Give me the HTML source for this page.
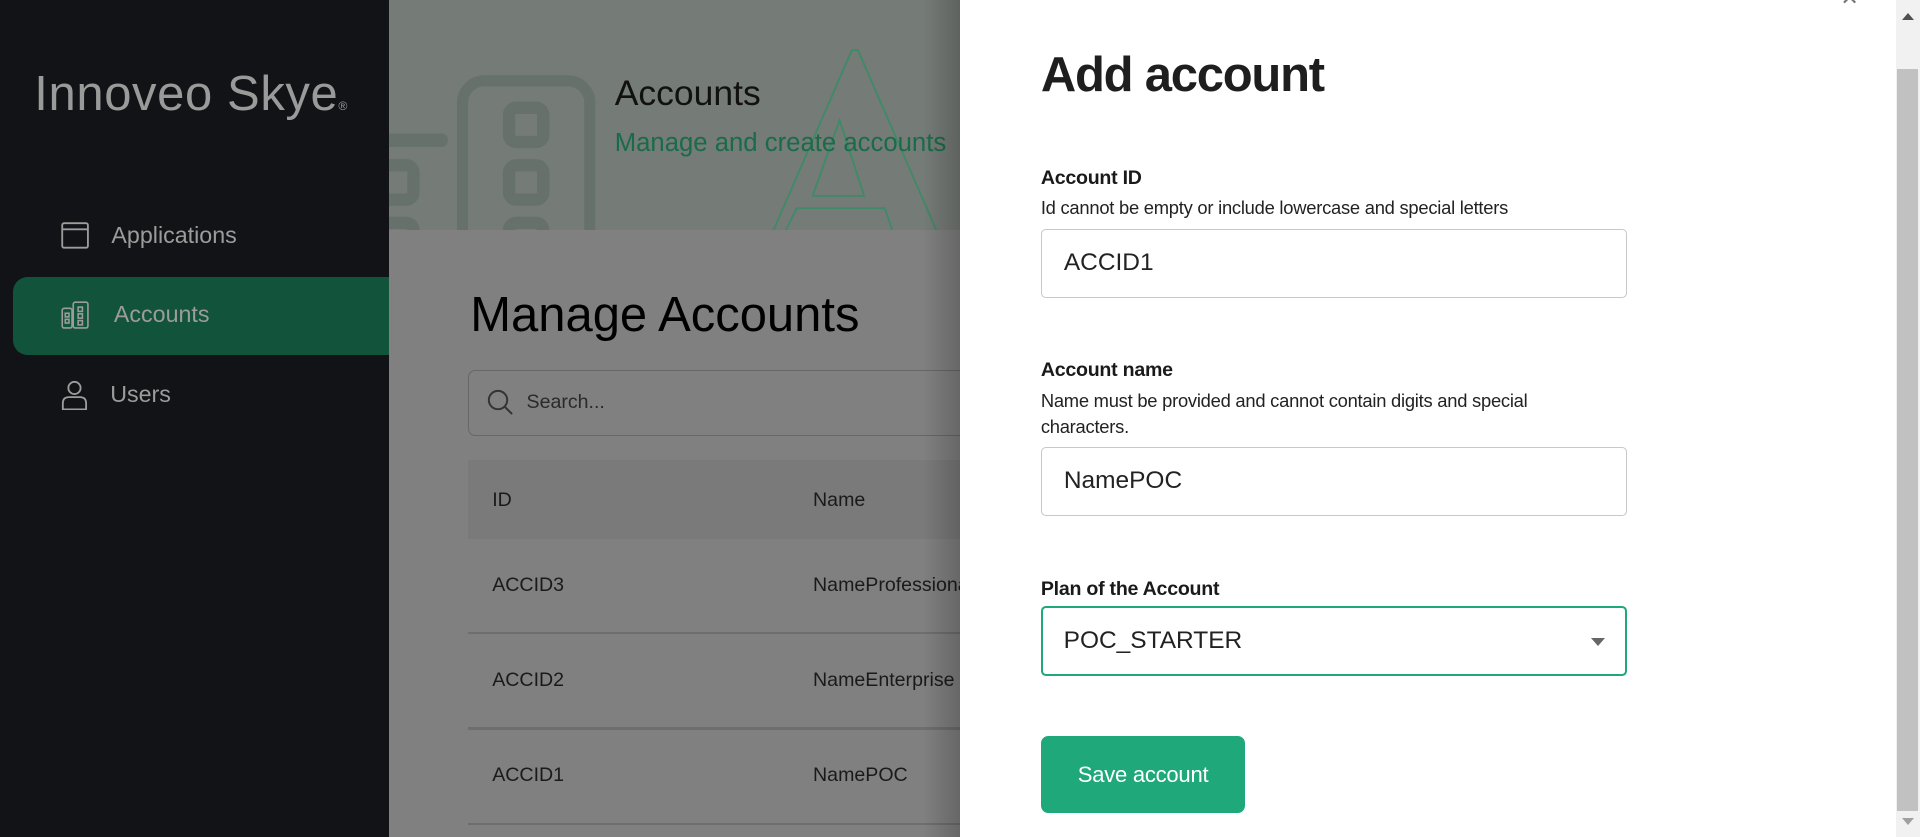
<!DOCTYPE html>
<html><head><meta charset="utf-8"><style>
html,body{margin:0;padding:0;width:1920px;height:837px;overflow:hidden;background:#fff}
#w{zoom:1.22449;width:1568px;height:684px;position:relative;font-family:"Liberation Sans",sans-serif;overflow:hidden}
.a{position:absolute}
#side{left:0;top:0;width:318px;height:684px;background:#121316}
.nav{color:#9c9c9c;font-size:19px}
#main{left:318px;top:0;width:466px;height:684px;background:#808080}
#hdr{left:318px;top:0;width:466px;height:188px;background:#757b77;overflow:hidden}
.row{left:382px;width:402px;border-bottom:2px solid #6e6e6e;height:0}
.cell{font-size:16px;color:#1a1a1a}
#drawer{left:784px;top:0;width:764px;height:684px;background:#fff}
.lbl{font-size:16px;font-weight:bold;color:#1a1a1a;left:850px;letter-spacing:-0.2px}
.help{font-size:15px;color:#222;left:850px;line-height:21px;letter-spacing:-0.2px}
.inp{left:850px;width:479px;height:56px;border:1px solid #c8c8c8;border-radius:4px;box-sizing:border-box;font-size:20px;color:#222;padding-left:18px;line-height:54px;background:#fff}
</style></head><body><div id="w">
<div class="a" id="side"></div>
<div class="a" style="left:28px;top:54px;font-size:40px;color:#9a9a9a;letter-spacing:0.5px">Innoveo Skye<span style="font-size:10px">®</span></div>
<svg class="a" style="left:50px;top:181px" width="24" height="22" viewBox="0 0 24 22"><rect x="1" y="1" width="21" height="20" rx="1.5" fill="none" stroke="#9c9c9c" stroke-width="1.5"/><line x1="1" y1="6" x2="22" y2="6" stroke="#9c9c9c" stroke-width="1.5"/></svg>
<div class="a nav" style="left:91px;top:181px">Applications</div>
<div class="a" style="left:11px;top:226px;width:307px;height:64px;background:#11533b;border-radius:12px 0 0 12px"></div>
<svg class="a" style="left:50px;top:246px" width="24" height="24" viewBox="0 0 24 24" fill="none" stroke="#9c9c9c" stroke-width="1.3"><rect x="1" y="6" width="8" height="16" rx="1.5"/><rect x="10" y="1" width="12" height="21" rx="1.5"/><rect x="3.5" y="10" width="3" height="3"/><rect x="3.5" y="15" width="3" height="3"/><rect x="14" y="5" width="3.5" height="3.5"/><rect x="14" y="10.5" width="3.5" height="3.5"/><rect x="14" y="16" width="3.5" height="3.5"/></svg>
<div class="a nav" style="left:93px;top:246px">Accounts</div>
<svg class="a" style="left:50px;top:310px" width="22" height="25" viewBox="0 0 22 25" fill="none" stroke="#9c9c9c" stroke-width="1.5"><circle cx="11" cy="6.5" r="5"/><path d="M1.5 24 V19 Q1.5 14 6.5 14 H15.5 Q20.5 14 20.5 19 V24 Z"/></svg>
<div class="a nav" style="left:90px;top:311px">Users</div>

<div class="a" id="main"></div>
<div class="a" id="hdr">
<svg width="466" height="188" fill="none">
<rect x="60" y="66" width="104" height="150" rx="18" stroke="#66716b" stroke-width="9"/>
<rect x="98" y="88" width="28" height="28" rx="6" stroke="#66716b" stroke-width="10"/>
<rect x="98" y="135" width="28" height="28" rx="6" stroke="#66716b" stroke-width="10"/>
<rect x="98" y="182" width="28" height="28" rx="6" stroke="#66716b" stroke-width="10"/>
<rect x="-8" y="135" width="28" height="28" rx="6" stroke="#66716b" stroke-width="10"/>
<rect x="-8" y="182" width="28" height="28" rx="6" stroke="#66716b" stroke-width="10"/>
<rect x="-10" y="109" width="58" height="11" rx="5" fill="#66716b"/>
<path d="M314 188 L378 41 L383 41 L447 188" stroke="#3f8a68" stroke-width="1.5"/>
<path d="M346 160 L368 98 L388 160 Z" stroke="#3f8a68" stroke-width="1.5"/>
<path d="M324 188 L333 170 L405 170 L411 188" stroke="#3f8a68" stroke-width="1.5"/>
</svg></div>
<div class="a" style="left:502px;top:60px;font-size:29px;color:#111">Accounts</div>
<div class="a" style="left:502px;top:105px;font-size:21px;color:#1a6b4a;white-space:nowrap">Manage and create accounts</div>
<div class="a" style="left:384px;top:234px;font-size:40px;color:#000;white-space:nowrap">Manage Accounts</div>
<div class="a" style="left:382px;top:302px;width:420px;height:54px;border:1px solid #676767;border-radius:6px;box-sizing:border-box"></div>
<svg class="a" style="left:398px;top:318px" width="22" height="22" fill="none" stroke="#333" stroke-width="1.6"><circle cx="9" cy="9" r="7.5"/><line x1="14.5" y1="14.5" x2="20.5" y2="20.5"/></svg>
<div class="a" style="left:430px;top:319px;font-size:16px;color:#2a2a2a">Search...</div>
<div class="a" style="left:382px;top:376px;width:402px;height:64px;background:#7a7a7a"></div>
<div class="a cell" style="left:402px;top:399px">ID</div>
<div class="a cell" style="left:664px;top:399px">Name</div>
<div class="a cell" style="left:402px;top:469px">ACCID3</div>
<div class="a cell" style="left:664px;top:469px;white-space:nowrap">NameProfessional</div>
<div class="a row" style="top:516px"></div>
<div class="a cell" style="left:402px;top:546px">ACCID2</div>
<div class="a cell" style="left:664px;top:546px;white-space:nowrap">NameEnterprise</div>
<div class="a row" style="top:594px;border-bottom-width:3px"></div>
<div class="a cell" style="left:402px;top:624px">ACCID1</div>
<div class="a cell" style="left:664px;top:624px">NamePOC</div>
<div class="a row" style="top:672px"></div>
<div class="a" style="left:754px;top:0;width:30px;height:684px;background:linear-gradient(to right,rgba(0,0,0,0),rgba(0,0,0,0.2))"></div>

<div class="a" id="drawer"></div>
<div class="a" style="left:850px;top:38px;font-size:40px;font-weight:bold;color:#1e1e1e;letter-spacing:-1px">Add account</div>
<div class="a lbl" style="top:136px">Account ID</div>
<div class="a help" style="top:159px">Id cannot be empty or include lowercase and special letters</div>
<div class="a inp" style="top:187px">ACCID1</div>
<div class="a lbl" style="top:293px">Account name</div>
<div class="a help" style="top:317px;width:470px">Name must be provided and cannot contain digits and special characters.</div>
<div class="a inp" style="top:365px">NamePOC</div>
<div class="a lbl" style="top:472px">Plan of the Account</div>
<div class="a inp" style="top:495px;height:57px;border:2px solid #1fa97a;padding-left:17px">POC_STARTER</div>
<div class="a" style="left:1299px;top:521px;width:0;height:0;border-left:6px solid transparent;border-right:6px solid transparent;border-top:7px solid #666"></div>
<div class="a" style="left:850px;top:601px;width:167px;height:63px;background:#1fa97a;border-radius:6px;color:#fff;font-size:18px;line-height:63px;text-align:center;letter-spacing:-0.2px">Save account</div>
<div class="a" style="left:1503px;top:-12px;font-size:18px;color:#777">✕</div>
<div class="a" style="left:1548px;top:0;width:20px;height:684px;background:#f1f1f1"></div>
<div class="a" style="left:1549px;top:56px;width:17px;height:606px;background:#c1c1c1"></div>
<div class="a" style="left:1553px;top:11px;width:0;height:0;border-left:5px solid transparent;border-right:5px solid transparent;border-bottom:6px solid #505050"></div>
<div class="a" style="left:1553px;top:668px;width:0;height:0;border-left:5px solid transparent;border-right:5px solid transparent;border-top:6px solid #a0a0a0"></div>
</div></body></html>
